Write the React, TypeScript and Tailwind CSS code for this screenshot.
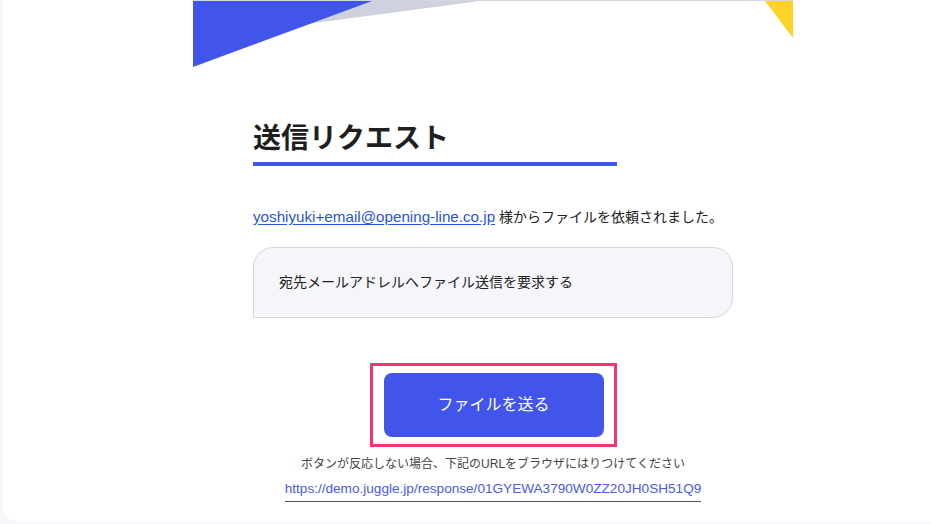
export default function App() {
  const jp = { fontFamily: '"Liberation Sans", "Noto Sans CJK JP", sans-serif' }

  return (
    <div className="w-[931px] h-[524px] bg-[#f6f6fb] pl-[3px] overflow-hidden" style={jp}>
      <div className="h-[522px] bg-white rounded-bl-[16px] pl-[190px]">
        {/* メールテンプレート本体 */}
        <div className="w-[600px] border-t border-[#d4d6e0]">
          {/* ヘッダー装飾 */}
          <svg width="600" height="67" viewBox="0 0 600 67" className="block">
            <polygon points="0,0 287,0 0,38" fill="#cdd2de" />
            <polygon points="0,0 179,0 0,66" fill="#4155eb" />
            <polygon points="572,0 600,0 600,37" fill="#ffd226" />
          </svg>

          <div className="px-[60px]">
            <h1 className="mt-[51px] text-[28px] leading-[39px] font-bold text-[#1f1f1f]">送信リクエスト</h1>
            <div className="mt-[4px] h-[4px] w-[364px] bg-[#4155eb]" />

            <p className="mt-[41px] text-[14px] leading-[20px] text-[#222]">
              <a className="text-[15.2px] text-[#2a55d6] underline underline-offset-2">yoshiyuki+email@opening-line.co.jp</a> 様からファイルを依頼されました。
            </p>

            <div className="mt-[20px] h-[71px] flex items-center pl-[25px] bg-[#f5f6fa] border border-[#d3d7e2] rounded-[20px] rounded-bl-none text-[14px] text-[#222]">
              宛先メールアドレルへファイル送信を要求する
            </div>

            <div className="mt-[45px] flex flex-col items-center">
              <div className="border-[3px] border-[#f5336e] pt-[7px] pb-[7px] pl-[11px] pr-[10px]">
                <button className="w-[220px] h-[64px] rounded-[8px] bg-[#4155eb] text-white text-[16px]">
                  ファイルを送る
                </button>
              </div>
              <p className="mt-[8px] text-[12px] leading-[18px] text-[#444]">
                ボタンが反応しない場合、下記のURLをブラウザにはりつけてください
              </p>
              <a className="mt-[7px] text-[13.6px] leading-[18px] text-[#4a5ae8] border-b border-[#555] pb-[3px]">
                https://demo.juggle.jp/response/01GYEWA3790W0ZZ20JH0SH51Q9
              </a>
            </div>
          </div>
        </div>
      </div>
    </div>
  )
}
